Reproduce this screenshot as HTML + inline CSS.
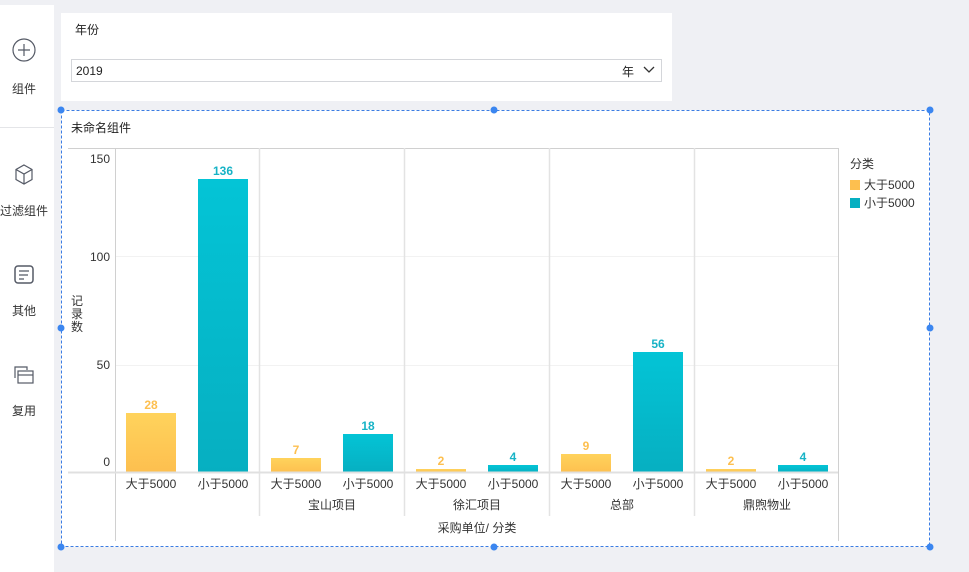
<!DOCTYPE html>
<html><head><meta charset="utf-8"><style>
body{margin:0;width:969px;height:572px;background:#eff0f4;overflow:hidden;font-family:"Liberation Sans","Noto Sans CJK SC",sans-serif;}
</style></head><body>
<svg width="969" height="572" xmlns="http://www.w3.org/2000/svg" style="position:absolute;left:0;top:0;font-family:'Liberation Sans','Noto Sans CJK SC',sans-serif">
<defs>
<linearGradient id="gy" x1="0" y1="0" x2="0" y2="1"><stop offset="0" stop-color="#ffd35c"/><stop offset="1" stop-color="#fdbf4f"/></linearGradient>
<linearGradient id="gc" x1="0" y1="0" x2="0" y2="1"><stop offset="0" stop-color="#04c4d6"/><stop offset="1" stop-color="#06afc1"/></linearGradient>
</defs>
<rect x="0" y="5" width="54" height="567" fill="#fff"/>
<line x1="0" y1="127.5" x2="54" y2="127.5" stroke="#e4e5e8"/>
<circle cx="24" cy="50" r="11" fill="none" stroke="#555a66" stroke-width="1.2"/>
<path d="M24 44v12M18 50h12" stroke="#555a66" stroke-width="1.2"/>
<text x="24" y="93" font-size="12" fill="#333" text-anchor="middle">组件</text>
<path d="M24 165l8 4.5v10l-8 4.5-8-4.5v-10z M16 169.5l8 4.5 8-4.5 M24 174v10" fill="none" stroke="#555a66" stroke-width="1.2"/>
<text x="24" y="215" font-size="12" fill="#333" text-anchor="middle">过滤组件</text>
<rect x="15" y="266" width="18" height="17" rx="3" fill="none" stroke="#555a66" stroke-width="1.5"/>
<path d="M19 271h10M19 275h9M19 279h5" stroke="#555a66" stroke-width="1.2"/>
<text x="24" y="315" font-size="12" fill="#333" text-anchor="middle">其他</text>
<path d="M15 378v-11h12v3" fill="none" stroke="#555a66" stroke-width="1.2"/>
<rect x="18" y="371" width="15" height="12" fill="none" stroke="#555a66" stroke-width="1.2"/>
<path d="M18 375h15" stroke="#555a66" stroke-width="1.2"/>
<text x="24" y="415" font-size="12" fill="#333" text-anchor="middle">复用</text>
<rect x="61" y="13" width="611" height="88" fill="#fff"/>
<text x="75" y="34" font-size="12" fill="#222">年份</text>
<rect x="71.5" y="59.5" width="590" height="22" fill="#fff" stroke="#d4d6da"/>
<text x="76" y="75" font-size="12" fill="#222">2019</text>
<text x="622" y="76" font-size="12" fill="#222">年</text>
<path d="M644 67l5 5 5-5" fill="none" stroke="#333" stroke-width="1.3"/>
<rect x="61" y="110" width="869" height="437" fill="#fff"/>
<rect x="61.5" y="110.5" width="868" height="436" fill="none" stroke="#3b7ce3" stroke-dasharray="3,2"/>
<g fill="#3b86f0"><circle cx="61" cy="110" r="3.5"/><circle cx="494" cy="110" r="3.5"/><circle cx="930" cy="110" r="3.5"/><circle cx="61" cy="328" r="3.5"/><circle cx="930" cy="328" r="3.5"/><circle cx="61" cy="547" r="3.5"/><circle cx="494" cy="547" r="3.5"/><circle cx="930" cy="547" r="3.5"/></g>
<text x="71" y="132" font-size="12" fill="#222">未命名组件</text>
<line x1="68" y1="148.5" x2="838" y2="148.5" stroke="#d0d0d0"/>
<line x1="115" y1="256.5" x2="838" y2="256.5" stroke="#f2f2f2"/>
<line x1="115" y1="365.5" x2="838" y2="365.5" stroke="#f2f2f2"/>
<line x1="115.5" y1="148" x2="115.5" y2="541" stroke="#d0d0d0"/>
<line x1="838.5" y1="148" x2="838.5" y2="541" stroke="#d0d0d0"/>
<g stroke="#e3e3e3" stroke-width="1.5"><line x1="259.5" y1="148" x2="259.5" y2="516"/><line x1="404.5" y1="148" x2="404.5" y2="516"/><line x1="549.5" y1="148" x2="549.5" y2="516"/><line x1="694.5" y1="148" x2="694.5" y2="516"/></g>
<g font-size="12" fill="#333" text-anchor="end"><text x="110" y="163">150</text><text x="110" y="261">100</text><text x="110" y="369">50</text><text x="110" y="466">0</text></g>
<g font-size="12" fill="#333" text-anchor="middle"><text x="77" y="305">记</text><text x="77" y="318">录</text><text x="77" y="331">数</text></g>
<g fill="url(#gy)"><rect x="126" y="413" width="50" height="60"/><rect x="271" y="458" width="50" height="15"/><rect x="416" y="469" width="50" height="4"/><rect x="561" y="454" width="50" height="19"/><rect x="706" y="469" width="50" height="4"/></g>
<g fill="url(#gc)"><rect x="198" y="179" width="50" height="294"/><rect x="343" y="434" width="50" height="39"/><rect x="488" y="465" width="50" height="8"/><rect x="633" y="352" width="50" height="121"/><rect x="778" y="465" width="50" height="8"/></g>
<line x1="68" y1="472.5" x2="838" y2="472.5" stroke="#e0e0e0" stroke-width="2"/>
<g font-size="12" font-weight="bold" text-anchor="middle" fill="#fdbf4f"><text x="151" y="409">28</text><text x="296" y="454">7</text><text x="441" y="465">2</text><text x="586" y="450">9</text><text x="731" y="465">2</text></g>
<g font-size="12" font-weight="bold" text-anchor="middle" fill="#17b3c6"><text x="223" y="175">136</text><text x="368" y="430">18</text><text x="513" y="461">4</text><text x="658" y="348">56</text><text x="803" y="461">4</text></g>
<g font-size="12" fill="#333" text-anchor="middle">
<text x="151" y="488">大于5000</text><text x="223" y="488">小于5000</text>
<text x="296" y="488">大于5000</text><text x="368" y="488">小于5000</text>
<text x="441" y="488">大于5000</text><text x="513" y="488">小于5000</text>
<text x="586" y="488">大于5000</text><text x="658" y="488">小于5000</text>
<text x="731" y="488">大于5000</text><text x="803" y="488">小于5000</text>
<text x="332" y="509">宝山项目</text><text x="477" y="509">徐汇项目</text><text x="622" y="509">总部</text><text x="767" y="509">鼎煦物业</text>
<text x="477" y="532">采购单位/ 分类</text></g>
<text x="850" y="168" font-size="12" fill="#333">分类</text>
<rect x="850" y="180" width="10" height="10" fill="#fdbf4f"/>
<text x="864" y="189" font-size="12" fill="#333">大于5000</text>
<rect x="850" y="198" width="10" height="10" fill="#06afc1"/>
<text x="864" y="207" font-size="12" fill="#333">小于5000</text>
</svg>
</body></html>
